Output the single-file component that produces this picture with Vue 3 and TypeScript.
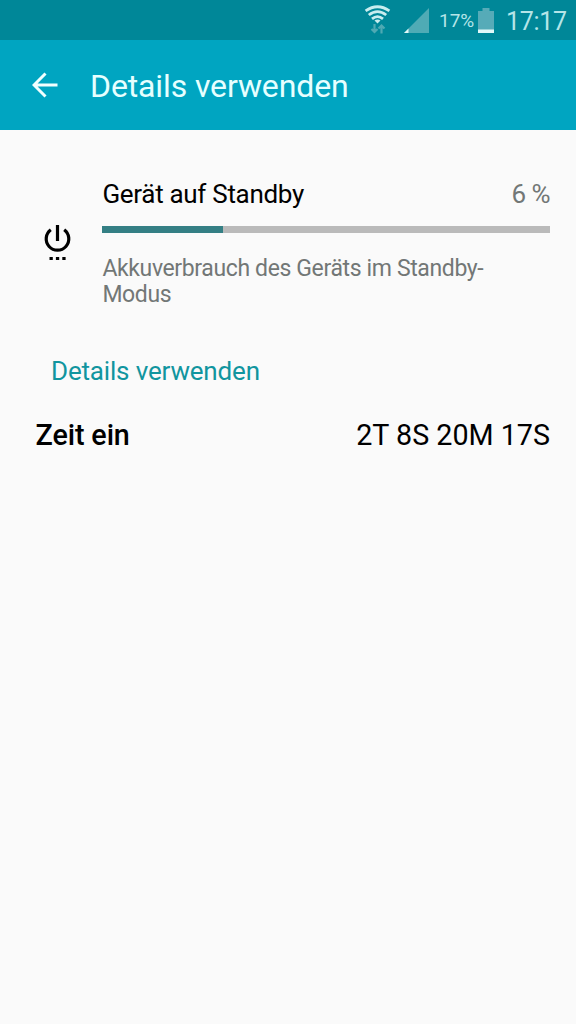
<script setup lang="ts">
const usage = 27
</script>

<template>
  <div class="screen">
    <div class="status">
      <svg class="wifi" width="28" height="30" viewBox="0 0 28 30" fill="none" stroke="#c9edef" stroke-width="2.8">
        <path d="M1.600 5.800Q13.500-2.400 25.400 5.800M4.800 10Q13.500 3.200 22.200 10M8 13.900Q13.500 9.300 19 13.900" />
        <path d="M10.500 15.500Q13.500 13.300 16.500 15.500L13.500 18.600z" fill="#c9edef" stroke="none" />
        <path d="M10.500 19v7.500M7.500 24l3 3 3-3M17.500 28.500V21M14.500 23.500l3-3 3 3" stroke="#4fa9b3" stroke-width="2.200" />
      </svg>
      <svg class="signal" width="26" height="26" viewBox="0 0 26 26">
        <path d="M25 0V25H0z" fill="#4fabb5" /><path d="M4.500 20.500V25H0z" fill="#e2f8f8" />
      </svg>
      <span class="percent">17%</span>
      <svg class="battery" width="16" height="26" viewBox="0 0 16 26">
        <path d="M4.500 0h7v3H16v22H0V3h4.500z" fill="#56abb8" /><path d="M0 21.500h16V25H0z" fill="#e2f8f8" />
      </svg>
      <span class="clock">17:17</span>
    </div>
    <header>
      <svg class="back" width="26" height="26" viewBox="0 0 26 26" fill="none" stroke="#f1ffff" stroke-width="3"><path d="M25.500 13H2M13.500 1.500L2 13l11.500 11.500" /></svg>
      <h1>Details verwenden</h1>
    </header>
    <main>
      <section class="item">
        <svg class="power" width="28" height="38" viewBox="0 0 28 38" fill="none" stroke="#000" stroke-width="3.2">
          <path d="M13.500 1v16M6.800 5.800a11.300 11.300 0 1 0 13.400 0" /><path d="M5.500 34.500h3.300M11.900 34.500h3.300M18.300 34.500h3.300" />
        </svg>
        <div class="info">
          <div class="line"><span class="name">Gerät auf Standby</span><span class="value">6 %</span></div>
          <div class="track"><div class="fill" :style="{ width: usage + '%' }"></div></div>
          <p>Akkuverbrauch des Geräts im Standby-<br />Modus</p>
        </div>
      </section>
      <h2>Details verwenden</h2>
      <div class="time"><strong>Zeit ein</strong><span class="duration">2T 8S 20M 17S</span></div>
    </main>
  </div>
</template>

<style>
body { margin: 0; }
</style>
<style scoped>
.screen { width: 576px; height: 1024px; background: #fafafa; font-family: Roboto, sans-serif; overflow: hidden; }
.status { height: 40px; background: #008798; display: flex; align-items: flex-start; box-sizing: border-box; padding-left: 364px; color: #b5e5e8; }
.wifi { margin-top: 5px; }
.signal { margin: 8px 0 0 12px; }
.percent { margin-left: 9px; font-size: 19px; line-height: 42px; width: 39px; white-space: nowrap; }
.battery { margin-top: 8px; }
.clock { margin-left: 12px; font-size: 25px; letter-spacing: -0.3px; line-height: 43px; white-space: nowrap; }
header { height: 89.5px; background: #00a5c1; display: flex; align-items: center; box-sizing: border-box; padding-left: 32px; }
h1 { margin: 2px 0 0 32px; font-size: 32px; letter-spacing: -0.12px; font-weight: 400; color: #e6ffff; }
.item { display: flex; padding: 47.5px 26px 0 44px; }
.power { margin: 46.5px 30.400px 0 0; flex: none; }
.info { flex: 1; }
.line { display: flex; justify-content: space-between; font-size: 26px; line-height: 35px; }
.name { letter-spacing: -0.3px; }
.value { color: #727776; letter-spacing: -0.5px; }
.track { height: 7px; margin-top: 13.500px; background: #bababa; }
.fill { height: 100%; background: #347f84; }
p { margin: 23.5px 0 0; font-size: 23px; letter-spacing: -0.37px; line-height: 26px; color: #727776; }
h2 { margin: 46.5px 0 0 51px; font-size: 26px; letter-spacing: -0.17px; line-height: 32px; font-weight: 400; color: #11959f; }
.time { display: flex; justify-content: space-between; margin: 30.5px 26px 0 35.5px; font-size: 28.700px; line-height: 36px; }
strong { font-weight: 500; letter-spacing: -0.1px; }
</style>
